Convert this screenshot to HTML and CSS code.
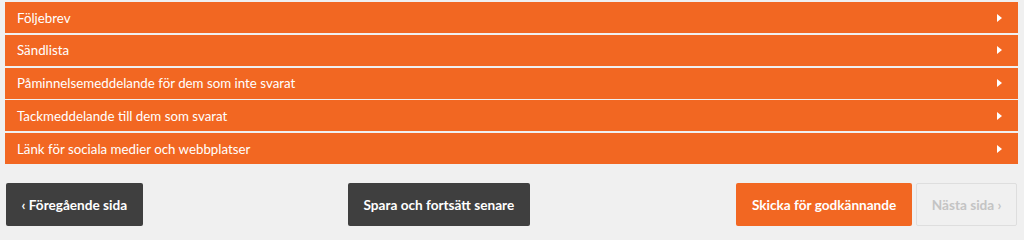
FILE: index.html
```html
<!DOCTYPE html>
<html lang="sv">
<head>
<meta charset="utf-8">
<title>Enkät</title>
<link rel="stylesheet" href="styles.css">
</head>
<body>
<div class="page">
  <div class="accordion">
    <div class="acc-row"><span>Följebrev</span><span class="arrow"></span></div>
    <div class="acc-row"><span>Sändlista</span><span class="arrow"></span></div>
    <div class="acc-row"><span>Påminnelsemeddelande för dem som inte svarat</span><span class="arrow"></span></div>
    <div class="acc-row"><span>Tackmeddelande till dem som svarat</span><span class="arrow"></span></div>
    <div class="acc-row"><span>Länk för sociala medier och webbplatser</span><span class="arrow"></span></div>
  </div>
  <div class="actions">
    <div class="col col-left"><button class="btn btn-dark">&lsaquo; Föregående sida</button></div>
    <div class="col col-mid"><button class="btn btn-dark">Spara och fortsätt senare</button></div>
    <div class="col col-right">
      <button class="btn btn-orange">Skicka för godkännande</button>
      <button class="btn btn-disabled">Nästa sida &rsaquo;</button>
    </div>
  </div>
</div>
</body>
</html>
```
FILE: styles.css
```css
html, body {
  margin: 0;
  padding: 0;
  background: #f0f0f0;
}
body {
  font-family: Lato, "Open Sans", sans-serif;
  font-size: 13.3px;
  color: #fff;
}
.page {
  padding: 2px 6px 0 5px;
}
.accordion {
  display: flex;
  flex-direction: column;
  gap: 1.75px;
}
.acc-row {
  background: #f26722;
  height: 31px;
  display: flex;
  align-items: center;
  justify-content: space-between;
  padding: 0 16px 0 12px;
  box-sizing: border-box;
  color: #fff;
}
.arrow {
  width: 0;
  height: 0;
  border-top: 4.5px solid transparent;
  border-bottom: 4.5px solid transparent;
  border-left: 5px solid #fff;
}
.actions {
  display: grid;
  grid-template-columns: 1fr 1fr 1fr;
  margin-top: 19px;
  padding: 0 1px 0 1px;
}
.col {
  display: flex;
  gap: 4px;
}
.col-mid {
  padding-left: 5px;
}
.col-right {
  justify-content: flex-end;
}
.btn {
  font-family: Lato, "Open Sans", sans-serif;
  font-size: 13.6px;
  font-weight: 700;
  height: 43px;
  border-radius: 2px;
  border: 1px solid transparent;
  padding: 0 14.5px;
  cursor: pointer;
}
.btn-orange {
  padding: 0 15px;
}
.btn-dark {
  background: #3f3f3f;
  color: #fff;
}
.btn-orange {
  background: #f26722;
  color: #fff;
}
.btn-disabled {
  background: #f0f0f0;
  border-color: #dedede;
  color: #c4c4c4;
}
```
